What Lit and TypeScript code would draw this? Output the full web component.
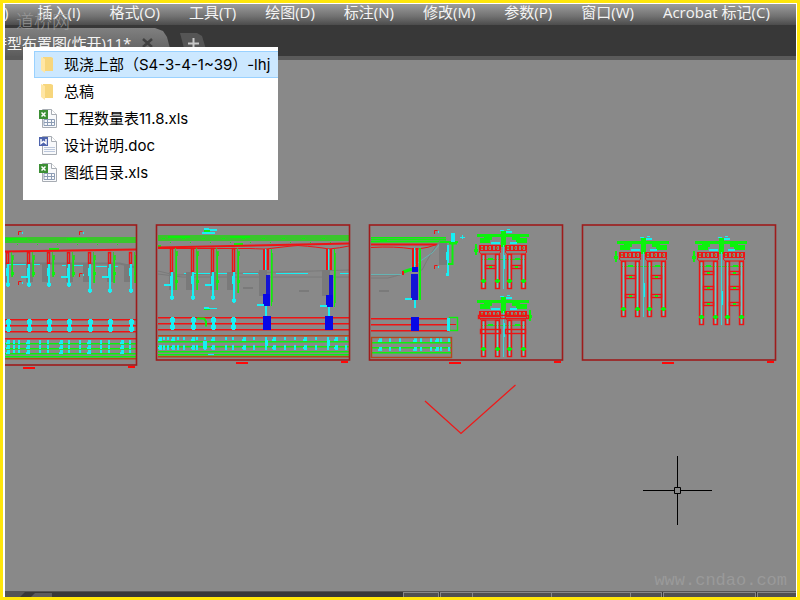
import { LitElement, html, svg, css } from "lit";
import { customElement, state } from "lit/decorators.js";
import { classMap } from "lit/directives/class-map.js";

const RED = "#ee1414";
const DARK_RED = "#9e1c1c";
const GREEN = "#0cf20c";
const BAND = "#3bc52d";
const CYAN = "#18f0f4";
const BLUE = "#0808e6";
const GREY = "#7a7a7a";
const RUST = "#b5481a";

const bar = (c: string, x: number, y: number, w: number, h: number) =>
  svg`<rect x=${x} y=${y} width=${w} height=${h} fill=${c}></rect>`;
const box = (c: string, x: number, y: number, w: number, h: number) =>
  svg`<rect x=${x + 0.5} y=${y + 0.5} width=${w - 1} height=${h - 1} fill="none" stroke=${c} stroke-width="1.4"></rect>`;
const line = (c: string, d: string, w = 1) =>
  svg`<path d=${d} fill="none" stroke=${c} stroke-width=${w}></path>`;

/** Sheet border with its scale mark and corner mark underneath. */
const sheet = (x: number, w: number, h: number, mark: number) => svg`
  <rect x=${x - 0.5} y="225" width=${w} height=${h} fill="none" stroke=${DARK_RED} stroke-width="1.6"></rect>
  ${bar("#ff0808", mark, 225 + h + 2, 12, 2)}
  ${bar("#ff0808", x + w - 9, 225 + h + 1, 7, 2)}`;

const greenBand = (x: number, y: number, w: number, first: number) => svg`
  ${bar(BAND, x, y, w, 6)}
  ${bar(GREEN, first, y + 1, 22, 2)}
  ${bar(GREEN, first + 62, y + 1, 20, 2)}
  ${Array.from({ length: Math.floor(w / 20) }, (_, i) => svg`
    ${bar(GREEN, x + 4 + i * 20, y + 3, 3, 1)}${bar(GREEN, x + 12 + i * 20, y + 7, 1, 1)}`)}`;

/** Slender column: red shaft, ragged cyan pile, green scale beside it. */
const column = (x: number, top: number, joint: number, end: number, k: number) => svg`
  ${bar(GREY, x - 7 + (k % 2) * 4, joint, 7, 18)}
  ${box(RED, x - 2, top, 3, joint - top)}
  ${bar(BAND, x + 3, top, 1, end - top - 10)}
  ${bar(BAND, x + 3, top + 3, 3, 5)}
  ${bar(GREEN, x + 4, top + 4, 1, end - top - 14)}
  ${bar(GREEN, x + 3, joint + 8, 3, 3)}
  ${bar(CYAN, x - 1, joint, 2, end - joint)}
  ${bar(CYAN, x - 2, joint + 4, 3, 8)}
  ${bar(CYAN, x - 2, end - 4, 4, 3)}
  ${k % 2 ? bar(CYAN, x - 8, joint + 12, 7, 2) : null}`;

const mainColumn = (x: number, top: number, joint: number, end: number) => svg`
  ${bar(GREY, x - 7, joint, 8, 26)}
  ${bar(RED, x - 3, top, 2, joint - top)}${bar(CYAN, x - 1, top, 1, joint - top)}
  ${bar(RED, x + 1, top, 2, joint - top)}
  ${bar(GREEN, x + 5, top, 1, end - top)}${bar(BAND, x + 6, top + 4, 1, end - top - 8)}
  ${bar("#1414d4", x, joint + 5, 4, 22)}
  ${bar(BLUE, x - 3, end - 12, 7, 12)}
  ${bar(CYAN, x - 1, end, 2, 10)}
  ${bar(CYAN, x - 9, end - 2, 7, 2)}`;

/** Horizontal lines with a fainter edge below each. */
const rails = (x: number, w: number, ys: number[], c: string) =>
  ys.map((y) => svg`
    ${bar(c, x, y, w, 1)}
    <rect x=${x} y=${y + 1} width=${w} height="1" fill=${c} opacity="0.5"></rect>`);

const ticks = (xs: number[], y: number, rows: number[][]) =>
  xs.map((x, i) => rows.map(([dy, h]) => svg`
    ${bar(CYAN, x, y + dy, i % 3 === 0 ? 3 : 2, h)}
    ${i % 3 === 0 ? bar(CYAN, x - 1, y + dy + 2, 4, 2) : null}`));

const pile = (x: number, y: number) => svg`
  ${bar(CYAN, x - 1, y, 3, 13)}${bar(CYAN, x - 2, y + 1, 5, 4)}${bar(CYAN, x - 2, y + 8, 5, 4)}`;

/** Corner survey mark. */
const mark = (x: number, y: number) => svg`
  ${line(RED, `M${x + 0.5} ${y + 4}v-3.5h3`)}${bar(CYAN, x + 4, y + 1, 1, 2)}`;

/** Front view of a twin pier. */
const pier = (cx: number, y: number, end: number, bars: number[], side: number) => svg`
  ${bar(CYAN, cx - 3, y - 15, 4, 1)}${bar(CYAN, cx - 1, y - 14, 10, 2)}${bar(CYAN, cx + 4, y - 16, 3, 1)}
  ${bar(GREEN, cx - 2, y - 14, 5, 16)}
  ${bar(GREEN, cx - 26, y - 11, 52, 3)}
  ${bar(GREEN, cx - 23, y - 7, 10, 5)}${bar(GREEN, cx - 19, y - 8, 8, 3)}
  ${bar(GREEN, cx + 13, y - 7, 11, 5)}${bar(GREEN, cx + 9, y - 8, 8, 3)}
  ${bar(CYAN, cx - 12, y - 3, 9, 2)}${bar(CYAN, cx + 7, y - 3, 7, 2)}
  ${side ? svg`${bar(GREEN, cx + side, y - 1, 2, 11)}${bar(GREEN, cx + side - 1, y + 4, 4, 3)}` : null}
  ${line(BAND, `M${cx - 22} ${y + 14.5}h45`)}${bar(GREEN, cx - 15, y + 13, 5, 2)}${bar(GREEN, cx + 12, y + 13, 5, 2)}
  ${[-24, 2].map((dx) => svg`
    ${bar(RED, cx + dx, y, 22, 1)}
    ${[0, 4, 8, 12, 16, 20].map((k) => bar(RED, cx + dx + k, y + 1, 2, 4))}
    ${[2, 9, 17].map((k) => bar("#a86a2a", cx + dx + k, y + 2, 2, 2))}
    ${line(RED, `M${cx + dx + 0.5} ${y + 5.5}h21v2l-2 1.5h-17l-2-1.5z`)}`)}
  ${[-22, -8, 4, 18].map((dx) => svg`
    ${bar("#70c8c8", cx + dx + 2, y + 9, 1, end - y - 10)}
    ${box(RED, cx + dx, y + 9, 5, end - y - 9)}
    ${bar(GREEN, cx + dx, end - 9, 5, 2)}${bar(GREEN, cx + dx + 1, end - 10, 3, 4)}`)}
  ${bars.map((b) => svg`
    ${box(RED, cx - 18, b, 11, 4)}${box(RED, cx + 8, b, 11, 4)}
    ${bar(GREEN, cx - 14, b + 1, 3, 2)}${bar(GREEN, cx + 12, b + 1, 3, 2)}`)}
  ${bar("#3bd5d8", cx, y, 1, end - y)}${bar(CYAN, cx + 1, end - 34, 1, 14)}`;

const drawing = svg`
  <g>
    ${greenBand(5, 237, 131, 5)}
    ${bar(GREEN, 49, 248, 10, 2)}
    ${line(RED, "M5 251.5L136 249.5", 2)}
    ${line(GREY, "M5 263.5H120L136 267.5", 2)}
    ${line(CYAN, "M8 264.5H40M62 265.5H85M96 266.5H118")}
    ${[8, 29, 49, 69, 90, 110, 131].map((x, i) => column(x, 252, 264, i < 4 ? 287 : 293, i))}
    ${mark(18, 231)}${mark(79, 231)}${mark(18, 281)}${mark(79, 273)}
    ${rails(5, 131, [319, 325, 331, 338], RED)}
    ${[8, 29, 49, 69, 90, 110, 131].map((x) => pile(x, 319))}
    ${rails(5, 131, [343, 348, 353, 356], GREEN)}
    ${ticks([7, 13, 18, 27, 39, 47, 60, 68, 79, 88, 100, 108, 121, 129], 340, [[0, 4], [5, 4], [10, 3]])}
    ${rails(5, 131, [358], RUST)}
    ${sheet(-8, 145, 140, 23)}
  </g>
  <g>
    ${greenBand(158, 235, 191, 168)}
    ${bar(CYAN, 204, 228, 5, 2)}${bar(CYAN, 209, 229, 8, 2)}${bar(CYAN, 202, 232, 13, 2)}${bar(GREEN, 204, 230, 6, 2)}
    ${bar(GREEN, 158, 245, 3, 2)}${bar(GREEN, 234, 243, 9, 2)}
    ${line(RED, "M158 247.5L349 243.5", 2)}
    ${line(RED, "M158 248.5H250Q262 249 266 249Q290 246 298 245.5Q318 247 329 249Q340 248 349 246")}
    ${line(GREY, "M158 271L175 275L349 270M158 274L182 277H349")}
    ${line(CYAN, "M184 273.5H232M243 273.5H258M276 273.5H308M340 273.5H349")}
    ${[172, 193, 213, 234].map((x, i) => column(x, 248, 272, i === 3 ? 303 : 300, i + 1))}
    ${bar(GREY, 243, 287, 10, 2)}${bar(GREY, 299, 290, 10, 2)}
    ${mainColumn(266, 249, 270, 306)}${mainColumn(329, 249, 270, 307)}
    ${bar(CYAN, 204, 307, 5, 2)}${bar(CYAN, 209, 308, 8, 1)}${bar(GREEN, 204, 309, 6, 1)}
    ${rails(158, 191, [317, 323, 329], RED)}
    ${line(GREEN, "M197 318.5h7l2 3v5", 2)}
    ${[172, 193, 213, 233].map((x) => pile(x, 317))}
    ${bar(BLUE, 263, 316, 8, 14)}${bar(BLUE, 325, 316, 8, 14)}
    ${rails(158, 191, [341, 346, 351, 354], GREEN)}
    ${ticks([159, 163, 167, 172, 177, 183, 192, 196, 204, 212, 225, 232, 243, 253, 265, 273, 284, 294, 304, 315, 327, 335, 345], 337, [[0, 3], [8, 5]])}
    ${bar(CYAN, 203, 341, 4, 8)}${bar(CYAN, 265, 340, 3, 6)}${bar(CYAN, 327, 340, 3, 6)}${bar(CYAN, 208, 354, 6, 1)}
    ${rails(158, 191, [335, 356], RUST)}
    ${sheet(157, 193, 135, 236)}
  </g>
  <g>
    ${rails(371, 75, [237, 239, 241], GREEN)}
    ${bar(GREEN, 380, 239, 7, 3)}${bar(GREEN, 440, 241, 18, 2)}
    ${line(RED, "M371 244.5H437", 2)}
    ${line(RED, "M371 247.5Q395 246 413 249H418Q428 248 438 244")}
    ${line(GREY, "M371 278H388Q402 275 409 270H422Q431 252 440 241M371 275H400")}
    ${line("#66b4b4", "M371 274.5H401L432 253L440 244")}
    ${bar(GREY, 439, 243, 8, 22)}${bar(GREY, 379, 290, 10, 2)}
    ${mark(434, 230)}${mark(434, 265)}
    ${bar(CYAN, 451, 233, 4, 9)}${bar(CYAN, 460, 237, 5, 1)}${bar(CYAN, 462, 235, 1, 4)}
    ${bar(CYAN, 447, 245, 2, 31)}${bar(CYAN, 446, 252, 3, 8)}${bar(CYAN, 446, 273, 3, 3)}
    ${line(GREEN, "M449 243.5H457M452.5 244V264H448", 2)}
    ${line(GREEN, "M403 272L412 269", 3)}
    ${bar(RED, 402, 271, 2, 4)}
    ${bar(RED, 412, 248, 2, 19)}${bar(CYAN, 414, 248, 1, 19)}${bar(RED, 416, 248, 2, 19)}
    ${bar(GREEN, 419, 248, 2, 52)}${bar(BLUE, 412, 267, 6, 5)}${bar("#1414d4", 411, 274, 7, 26)}
    ${bar(CYAN, 405, 298, 7, 2)}${bar(CYAN, 414, 300, 2, 8)}
    ${rails(371, 78, [318, 324, 330], RED)}
    ${bar(BLUE, 411, 317, 8, 14)}
    ${box(GREEN, 449, 317, 9, 14)}${bar(CYAN, 447, 318, 3, 13)}${bar(RED, 450, 324, 6, 1)}
    ${rails(371, 80, [342, 347, 352], GREEN)}
    ${ticks([379, 389, 399, 414, 420, 430, 436, 440, 448], 338, [[0, 4], [9, 4]])}
    ${box(RUST, 371, 337, 81, 21)}
    ${sheet(370, 193, 135, 449)}
    ${pier(503, 245, 289, [265], -28)}
    ${pier(503, 311, 357, [], 26)}
    ${box(RED, 478, 315, 51, 4)}${box(RED, 480, 329, 21, 5)}${box(RED, 505, 329, 21, 5)}
  </g>
  <g>
    ${sheet(583, 193, 135, 662)}
    ${pier(643, 252, 317, [275, 294], -28)}
    ${pier(721, 252, 325, [271, 286, 302], -28)}
  </g>`;

interface FileEntry {
  name: string;
  kind: "folder" | "xls" | "doc";
}

const sheetIcon = (kind: "xls" | "doc") => html`
  <svg class="icon" viewBox="0 0 18 20" aria-hidden="true">
    <path d="M3.500.5h9l5 5v13h-14z" fill="#f8f9fb" stroke="#a7acb3"></path>
    <path d="M12.500.5v5h5" fill="#fff" stroke="#a7acb3"></path>
    ${kind === "xls"
      ? svg`<path d="M5 10.500h10.500v6H5zM5 13.500h10M8.500 10v6M12.500 10v6" stroke="#8d9db5" fill="none"></path>`
      : svg`<path d="M5 11.500h11M5 13.500h11M5 15.500h11" stroke="#bcc8dc" fill="none"></path>`}
    <rect x="0" y="1" width="9" height="9" fill=${kind === "xls" ? "#3c8f35" : "#4e64ad"}></rect>
    <path d=${kind === "xls" ? "M2.500 3.500l4 4M6.500 3.500l-4 4" : "M2 3v4.500l2.500-2L7 7.500V3"}
      stroke="#fff" stroke-width="1.500" fill="none"></path>
  </svg>`;

const folderIcon = html`
  <svg class="icon" viewBox="0 0 18 20" aria-hidden="true">
    <path d="M4 2h8l2 1v13H4z" fill="#f7d67c"></path>
    <path d="M2 2l4 2v14l-4-3z" fill="#ffe6a4"></path>
  </svg>`;

@customElement("app-root")
export class AppRoot extends LitElement {
  @state() private selected = 0;

  private menus = ["插入(I)", "格式(O)", "工具(T)", "绘图(D)", "标注(N)", "修改(M)", "参数(P)", "窗口(W)", "Acrobat 标记(C)"];

  private files: FileEntry[] = [
    { name: "现浇上部（S4-3-4-1~39）-lhj", kind: "folder" },
    { name: "总稿", kind: "folder" },
    { name: "工程数量表11.8.xls", kind: "xls" },
    { name: "设计说明.doc", kind: "doc" },
    { name: "图纸目录.xls", kind: "xls" },
  ];

  static styles = css`
    :host {
      display: block;
      box-sizing: border-box;
      height: 100vh;
      border: 3px solid #ffe60a;
      background: #fff;
      font: 15px/20px "Open Sans", "Noto Sans CJK SC", sans-serif;
      color: #f4f4f4;
    }
    * { box-sizing: border-box; }
    button {
      font: inherit;
      color: inherit;
      background: none;
      border: 0;
      padding: 0;
      white-space: nowrap;
    }
    .window {
      position: relative;
      display: flex;
      flex-direction: column;
      height: 100%;
      border: solid #fff;
      border-width: 1px 1px 0 2px;
      overflow: hidden;
      background: #383838;
    }
    .menu {
      display: flex;
      gap: 29px;
      height: 21px;
      flex: none;
      align-items: center;
      margin-left: -1px;
      padding-bottom: 5px;
      background: linear-gradient(#9c9c9c, #707070 60%, #4c4c4c);
    }
    .tabs {
      display: flex;
      height: 35px;
      flex: none;
      padding-top: 3px;
      border-bottom: 4px solid #5a5a5a;
      gap: 8px;
    }
    .tab {
      display: flex;
      align-items: center;
      gap: 11px;
      width: 167px;
      padding-top: 2px;
      background: linear-gradient(#808080, #5c5c5c);
      clip-path: polygon(0 0, 150px 0, 158px 3px, 162px 9px, 167px 28px, 0 28px);
    }
    .title {
      margin-left: -13px;
      white-space: nowrap;
    }
    .close { display: flex; }
    .add {
      display: flex;
      width: 28px;
      margin-top: 5px;
      padding: 5px 0 0 8px;
      background: #555;
      clip-path: polygon(0 0, 17px 0, 22px 3px, 28px 23px, 6px 23px);
    }
    .canvas {
      flex: 1;
      min-height: 0;
      background: #898989;
    }
    .canvas svg {
      display: block;
      width: 100%;
      height: 100%;
    }
    .status {
      display: flex;
      height: 6px;
      flex: none;
      border-top: 1px solid #555;
    }
    .layouts {
      flex: 408;
      height: 5px;
    }
    .layouts svg { display: block; }
    .cell {
      background: #505050;
      border: solid #888;
      border-width: 1px 0 0 1px;
    }
    .c35 { flex: 35; }
    .c31 { flex: 31; }
    .c80 { flex: 80; }
    .c93 { flex: 93; }
    .c39 { flex: 39; }
    .end {
      border-right-width: 1px;
      margin-right: 1px;
    }
    .files {
      position: absolute;
      left: 18px;
      top: 43px;
      width: 255px;
      height: 153px;
      padding: 4px 0 0 11px;
      background: #fff;
      color: #000;
      font-family: Inter, "Noto Sans CJK SC", sans-serif;
    }
    .file {
      display: flex;
      align-items: center;
      gap: 7px;
      width: 100%;
      height: 27px;
      padding-left: 4px;
      border: 1px solid transparent;
      border-right: 0;
    }
    .chosen {
      background: #cce8ff;
      border-color: #99d1ff;
    }
    .icon {
      width: 18px;
      height: 20px;
      flex: none;
    }
    .stamp, .site {
      position: absolute;
      pointer-events: none;
      white-space: nowrap;
    }
    .stamp {
      left: 11px;
      top: 6px;
      font: 18px/20px "Noto Sans CJK SC", sans-serif;
      font-weight: 300;
      color: #a0a0a0;
      opacity: 0.8;
    }
    .site {
      right: 9px;
      bottom: 4px;
      font: 17px/24px "Liberation Mono", monospace;
      color: #9a9a9a;
    }
  `;

  render() {
    return html`
      <div class="window">
        <nav class="menu">
          <button>)</button>
          ${this.menus.map((m) => html`<button>${m}</button>`)}
        </nav>
        <div class="tabs">
          <div class="tab">
            <span class="title">特型布置图(炸开)11*</span>
            <button class="close" aria-label="关闭">
              <svg width="11" height="10" viewBox="0 0 11 10">
                <path d="M1 1l9 8M10 1l-9 8" stroke="#404040" stroke-width="2.500"></path>
              </svg>
            </button>
          </div>
          <button class="add" aria-label="新建">
            <svg width="11" height="11" viewBox="0 0 11 11">
              <path d="M5.500 0v11M0 5.500h11" stroke="#c8c8c8" stroke-width="2"></path>
            </svg>
          </button>
        </div>
        <main class="canvas">
          <svg viewBox="5 60 791 531" preserveAspectRatio="xMinYMin meet">
            ${drawing}
            <path d="M425 401L461 433.500L515.500 385" fill="none" stroke="#f01818" stroke-width="1.300"></path>
            <path d="M643 490.500h31M681 490.500h31M677.500 456v31M677.500 494v31M674.500 487.500h6v6h-6z"
              fill="none" stroke="#000"></path>
          </svg>
        </main>
        <div class="status">
          <div class="layouts">
            <svg width="48" height="5" viewBox="0 0 48 5">
              <path d="M0 0h20l-5 5H0z" fill="#555"></path>
              <path d="M30 1h17v4H26z" fill="#5c5c5c"></path>
            </svg>
          </div>
          <div class="cell c35 end"></div>
          <div class="cell c31"></div>
          <div class="cell c80"></div>
          <div class="cell c80"></div>
          <div class="cell c31 end"></div>
          <div class="cell c93 end"></div>
          <div class="cell c39"></div>
        </div>
        <div class="files">
          ${this.files.map(
            (f, i) => html`
              <button
                class=${classMap({ file: true, chosen: i === this.selected })}
                @click=${() => (this.selected = i)}
              >
                ${f.kind === "folder" ? folderIcon : sheetIcon(f.kind)}<span>${f.name}</span>
              </button>`
          )}
        </div>
        <div class="stamp">道桥网</div>
        <div class="site">www.cndao.com</div>
      </div>
    `;
  }
}
